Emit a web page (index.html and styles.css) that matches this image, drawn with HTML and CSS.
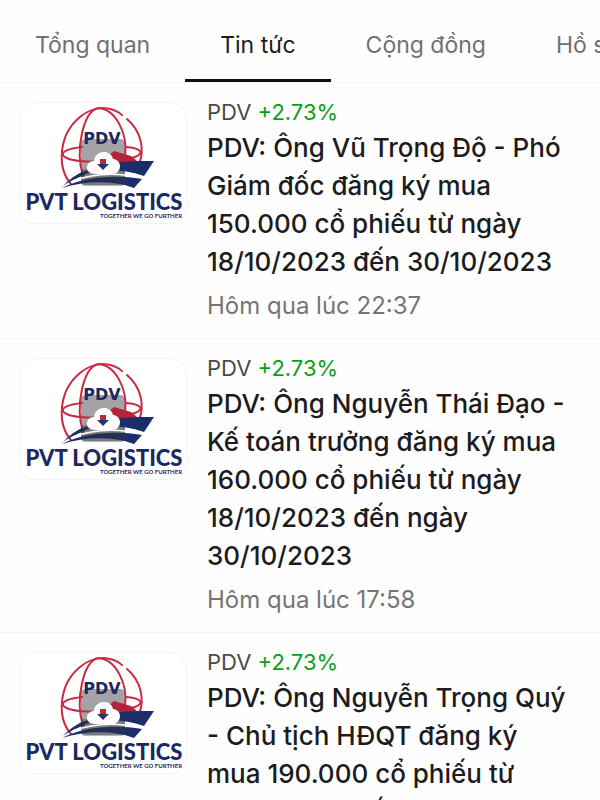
FILE: index.html
```html
<!DOCTYPE html>
<html lang="vi">
<head>
<meta charset="utf-8">
<meta name="viewport" content="width=device-width, initial-scale=1">
<title>PDV - Tin tức</title>
<link rel="stylesheet" href="styles.css">
</head>
<body>
<svg class="defs" aria-hidden="true">
  <symbol id="pvt-logo" viewBox="0 0 168 122">
    <path fill="#a3a3a5" d="M62 42Q62 37 67 37H101Q106 37 106 42V78Q106 83 101 83H67Q62 83 62 78Z"/>
    <g fill="none" stroke="#c92a43" stroke-width="2" stroke-linecap="round">
      <path d="M52 82C38 66 39 33 61 15C75 3 92 4 103 13"/>
      <path d="M108 17C122 29 126 47 120 62"/>
      <path d="M64 74C56 48 64 10 79 6C97 7 109 32 106 54"/>
      <path d="M63 45C38 48 38 56 60 59C78 61 103 59 116 55C126 51 122 46 107 45"/>
    </g>
    <path fill="#b32436" d="M84 58L95 49L112 54L118 59L98 65Z"/>
    <path fill="#1c2d6c" d="M56 75C82 59 108 59 135 59L125 74C102 66 78 67 56 75Z"/>
    <path fill="#1c2d6c" d="M43 86C62 75 96 72 123 77L115 86C92 78 66 79 43 86Z"/>
    <path fill="#1c2d6c" d="M44 84C54 74 60 71 68 68L66 73C58 76 51 79 44 84Z"/>
    <path fill="#333" fill-opacity=".35" d="M62 67H106V80Q106 84 102 84H66Q62 84 62 80Z"/>
    <path fill="none" stroke="#fff" stroke-width="1.500" d="M54 79C78 70 101 71 124 76"/>
    <path fill="#fff" d="M76 72C65 72 66 59 75 59C76 48 92 47 94 57C104 58 103 72 93 72Z"/>
    <path fill="#c12735" d="M81 57H87V62H81Z"/>
    <path fill="#24386f" d="M78 62H90L84 68Z"/>
    <text class="logo-mark" x="83" y="42" text-anchor="middle">PDV</text>
    <text class="logo-name" x="85" y="108" text-anchor="middle">PVT LOGISTICS</text>
    <text class="logo-tag" x="163" y="116" text-anchor="end">TOGETHER WE GO FURTHER</text>
  </symbol>
</svg>
<nav class="tabs">
  <a class="tab" href="#overview">Tổng quan</a>
  <a class="tab tab-active" href="#news" aria-current="page">Tin tức</a>
  <a class="tab" href="#community">Cộng đồng</a>
  <a class="tab" href="#profile">Hồ sơ</a>
</nav>
<main class="feed">
  <article class="item">
    <svg class="thumb" role="img" aria-label="PVT Logistics"><use href="#pvt-logo"/></svg>
    <div class="body">
      <p class="ticker">PDV <span class="gain">+2.73%</span></p>
      <h2 class="title">PDV: Ông Vũ Trọng Độ - Phó Giám đốc đăng ký mua 150.000 cổ phiếu từ ngày 18/10/2023 đến 30/10/2023</h2>
      <p class="time">Hôm qua lúc 22:37</p>
    </div>
  </article>
  <article class="item">
    <svg class="thumb" role="img" aria-label="PVT Logistics"><use href="#pvt-logo"/></svg>
    <div class="body">
      <p class="ticker">PDV <span class="gain">+2.73%</span></p>
      <h2 class="title">PDV: Ông Nguyễn Thái Đạo - Kế toán trưởng đăng ký mua 160.000 cổ phiếu từ ngày 18/10/2023 đến ngày 30/10/2023</h2>
      <p class="time">Hôm qua lúc 17:58</p>
    </div>
  </article>
  <article class="item">
    <svg class="thumb" role="img" aria-label="PVT Logistics"><use href="#pvt-logo"/></svg>
    <div class="body">
      <p class="ticker">PDV <span class="gain">+2.73%</span></p>
      <h2 class="title">PDV: Ông Nguyễn Trọng Quý - Chủ tịch HĐQT đăng ký mua 190.000 cổ phiếu từ 18/10/2023 đến ngày</h2>
    </div>
  </article>
</main>
</body>
</html>
```
FILE: styles.css
```css
* {
  box-sizing: border-box;
}

html {
  overflow: hidden;
}

body {
  margin: 0;
  height: 100vh;
  overflow: hidden;
  background: #fefefe;
  color: #1c1c1e;
  font-family: Inter, "Noto Sans", sans-serif;
}

.defs {
  display: none;
}

.tabs {
  display: flex;
  padding-top: 12px;
  border-bottom: 1px solid #f3f3f3;
  white-space: nowrap;
}

.tab {
  flex: none;
  padding: 0 35px;
  border-bottom: 3px solid transparent;
  color: #707070;
  font-size: 23px;
  line-height: 67px;
  text-decoration: none;
}

.tab-active {
  border-color: #111;
  color: #1c1c1e;
}

.item {
  display: flex;
  align-items: flex-start;
  gap: 20px;
  padding: 16px 28px 17px 19px;
  border-bottom: 1px solid #f3f3f3;
}

.thumb {
  flex: none;
  width: 168px;
  height: 122px;
  margin-top: 3px;
  outline: 1px solid #f3f3f3;
  outline-offset: -1px;
  border-radius: 16px;
  background: #fff;
}

.body {
  flex: 1;
  min-width: 0;
}

.ticker,
.title,
.time {
  margin: 0;
}

.ticker {
  color: #4a4a4a;
  font-size: 22px;
  line-height: 26px;
}

.gain {
  color: #0aa014;
}

.title {
  margin: 4px 0 10px;
  font-size: 26px;
  font-weight: 500;
  line-height: 38px;
}

.time {
  color: #757575;
  font-size: 24px;
  line-height: 30px;
}

.logo-mark,
.logo-name,
.logo-tag {
  fill: #1c2860;
  font-family: Lato, sans-serif;
  font-weight: 900;
}

.logo-mark {
  font-family: "DejaVu Sans", sans-serif;
  font-size: 16px;
  font-weight: 700;
}

.logo-name {
  font-size: 22px;
}

.logo-tag {
  font-size: 6px;
  font-weight: 700;
}
```
